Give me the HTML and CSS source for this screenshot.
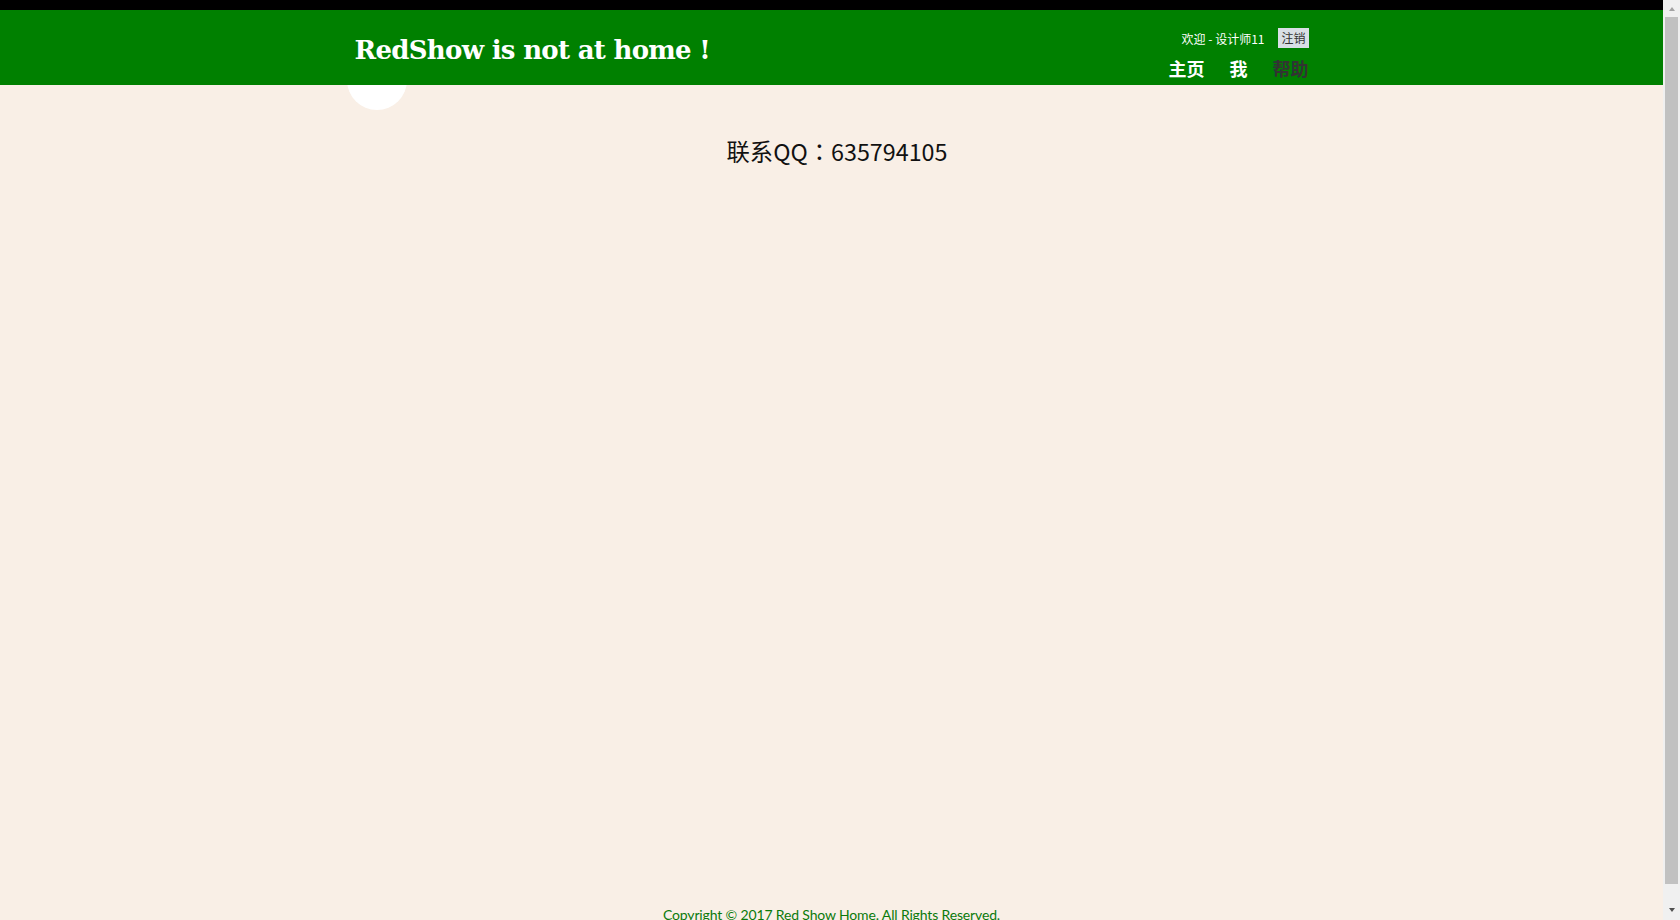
FILE: index.html
```html
<!DOCTYPE html>
<html lang="zh-CN">
<head>
<meta charset="utf-8">
<title>RedShow</title>
<link rel="stylesheet" href="styles.css">
</head>
<body>
<div class="page">
  <header class="topbar">
    <div class="container head-inner">
      <h1 class="site-title">RedShow is not at home !</h1>
      <div class="head-right">
        <div class="user-row">
          <span class="welcome">欢迎 - 设计师11</span>
          <a class="logout">注销</a>
        </div>
        <nav class="nav">
          <a class="nav-link">主页</a>
          <a class="nav-link">我</a>
          <a class="nav-link nav-active">帮助</a>
        </nav>
      </div>
    </div>
  </header>
  <main class="container main">
    <div class="avatar"></div>
    <p class="contact">联系QQ<span class="fw-colon" lang="ja">：</span>635794105</p>
  </main>
  <footer class="footer">
    <p class="copyright">Copyright © 2017 Red Show Home. All Rights Reserved.</p>
  </footer>
</div>
<div class="scrollbar" aria-hidden="true">
  <span class="sb-arrow sb-up"></span>
  <span class="sb-thumb"></span>
  <span class="sb-arrow sb-down"></span>
</div>
</body>
</html>
```
FILE: styles.css
```css
html, body {
  margin: 0;
  padding: 0;
  height: 920px;
  overflow: hidden;
}
body {
  background: #f9efe6;
  font-family: "Noto Sans CJK SC", "Noto Sans", sans-serif;
  color: #111;
}
.page {
  width: calc(100% - 17px);
}
.container {
  width: 970px;
  margin: 0 auto;
  box-sizing: border-box;
}
.topbar {
  background: #008000;
  border-top: 10px solid #000;
  height: 75px;
  position: relative;
  z-index: 2;
}
.head-inner {
  height: 75px;
  display: flex;
  justify-content: space-between;
  align-items: flex-start;
  padding: 0 8px;
}
.site-title {
  margin: 20px 0 0 0;
  font-family: "DejaVu Serif", serif;
  font-weight: bold;
  font-size: 26px;
  line-height: 40px;
  color: #fff;
  letter-spacing: -0.7px;
}
.head-right {
  display: flex;
  flex-direction: column;
  align-items: flex-end;
  padding-top: 18px;
}
.user-row {
  display: flex;
  align-items: center;
  gap: 14px;
  height: 20px;
}
.welcome {
  font-size: 12px;
  color: #fff;
}
.logout {
  background: #d9dfe5;
  color: #333;
  font-size: 12px;
  line-height: 20px;
  height: 20px;
  padding: 0 3px;
}
.nav {
  display: flex;
  gap: 25px;
  margin-top: 7px;
}
.nav-link {
  font-size: 18px;
  font-weight: bold;
  color: #fff;
  line-height: 26px;
}
.nav-active {
  color: #333;
}
.main {
  display: flow-root;
  height: 820px;
}
.avatar {
  width: 60px;
  height: 60px;
  border-radius: 50%;
  background: #fff;
  margin-top: -35px;
  position: relative;
  z-index: 1;
}
.contact {
  margin: 25px 0 0 0;
  text-align: center;
  font-size: 23.3px;
  line-height: 33px;
  padding-left: 11px;
}
.fw-colon {
  font-family: "Noto Sans CJK JP", "Noto Sans CJK SC", sans-serif;
}
.footer {
  height: 15px;
  overflow: hidden;
}
.copyright {
  margin: 0;
  text-align: center;
  font-family: "Lato", "Open Sans", sans-serif;
  font-size: 14px;
  line-height: 20px;
  letter-spacing: -0.15px;
  color: #0b7a0b;
}
.scrollbar {
  position: fixed;
  top: 0;
  right: 0;
  width: 17px;
  height: 920px;
  background: #f0f0f0;
  display: flex;
  flex-direction: column;
  align-items: center;
}
.sb-arrow {
  width: 0;
  height: 0;
  border-left: 3.5px solid transparent;
  border-right: 3.5px solid transparent;
}
.sb-up {
  margin-top: 7px;
  border-bottom: 4px solid #a3a3a3;
}
.sb-thumb {
  width: 13px;
  height: 867px;
  margin-top: 6px;
  background: #c1c1c1;
}
.sb-down {
  margin-top: 24px;
  border-top: 4px solid #505050;
}
```
